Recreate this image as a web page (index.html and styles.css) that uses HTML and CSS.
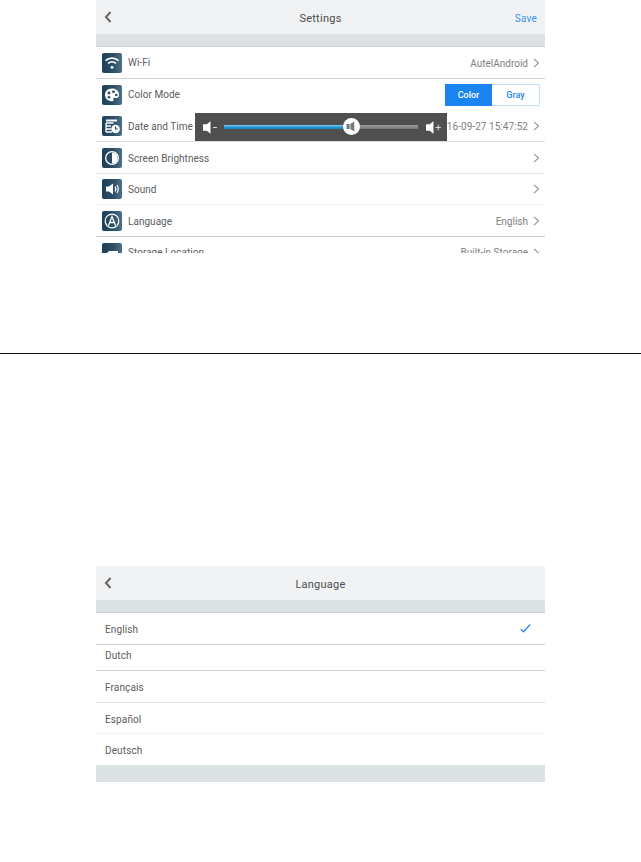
FILE: index.html
```html
<!DOCTYPE html>
<html lang="en">
<head>
<meta charset="utf-8">
<title>Settings</title>
<link rel="stylesheet" href="styles.css">
</head>
<body>
<section class="top-area">
  <div class="app clipped">
    <header class="bar">
      <svg class="back" viewBox="0 0 8 12"><path d="M6.500 1 2 6l4.500 5" /></svg>
      <span class="bar-title">Settings</span>
      <span class="save">Save</span>
    </header>
    <div class="band"></div>
    <div class="row h32 line-a">
      <svg class="icon" viewBox="0 0 20 20"><rect width="20" height="20" rx="2" fill="url(#tile)"/><g fill="none" stroke="#fff" stroke-width="1.700"><path d="M3.500 7.600c3.700-3.200 9.300-3.200 13 0"/><path d="M6 10.300c2.300-2 5.700-2 8 0"/></g><circle cx="10" cy="14.300" r="1.500" fill="#fff"/></svg>
      <span class="label">Wi-Fi</span>
      <span class="value low">AutelAndroid</span>
      <svg class="chev" viewBox="0 0 7 10"><path d="m1 .8 4.500 4.200L1 9.200"/></svg>
    </div>
    <div class="row h31">
      <svg class="icon" viewBox="0 0 20 20"><rect width="20" height="20" rx="2" fill="url(#tile)"/><path d="M10 3.500c4.200 0 7 2.700 7 6.200 0 2.600-1.800 3.700-3.400 3.200-1.500-.5-2.600.3-2.200 1.500.4 1.300-.6 2.100-2 1.900C5.700 15.900 3 13.300 3 9.800 3 6.300 5.800 3.500 10 3.500Z" fill="#fff"/><circle cx="7" cy="8" r="1.400" fill="#274a63"/><circle cx="11.500" cy="6.800" r="1.400" fill="#274a63"/><circle cx="14.300" cy="10" r="1.300" fill="#274a63"/><circle cx="7" cy="12.300" r="1.300" fill="#274a63"/></svg>
      <span class="label">Color Mode</span>
      <div class="toggle"><span class="seg on">Color</span><span class="seg">Gray</span></div>
    </div>
    <div class="row h32 line-b">
      <svg class="icon" viewBox="0 0 20 20"><rect width="20" height="20" rx="2" fill="url(#tile)"/><path d="M4 3.500h11v2H4z" fill="#fff"/><path d="M4 7h7.500M4 10h5M4 13h5M4 16h6M4 7v9" fill="none" stroke="#fff" stroke-width="1.300"/><circle cx="13.500" cy="13" r="4.300" fill="#fff"/><path d="M13.500 10.500V13h2" fill="none" stroke="#274a63" stroke-width="1.200"/></svg>
      <span class="label low">Date and Time</span>
      <span class="value low stamp">2016-09-27 15:47:52</span>
      <svg class="chev" viewBox="0 0 7 10"><path d="m1 .8 4.500 4.200L1 9.200"/></svg>
    </div>
    <div class="row h32 line-c">
      <svg class="icon" viewBox="0 0 20 20"><rect width="20" height="20" rx="2" fill="url(#tile)"/><circle cx="10" cy="10" r="6.300" fill="none" stroke="#fff" stroke-width="1.300"/><path d="M10 4.500a5.500 5.500 0 0 1 0 11Z" fill="#fff"/></svg>
      <span class="label low">Screen Brightness</span>
      <span class="value"></span>
      <svg class="chev" viewBox="0 0 7 10"><path d="m1 .8 4.500 4.200L1 9.200"/></svg>
    </div>
    <div class="row h31 line-d">
      <svg class="icon" viewBox="0 0 20 20"><rect width="20" height="20" rx="2" fill="url(#tile)"/><path d="M4 7.500h3L11 4.500v11l-4-3H4Z" fill="#fff"/><path d="M13 7.500c1 1.500 1 3.500 0 5M15 6c1.500 2.500 1.500 5.500 0 8" fill="none" stroke="#fff" stroke-width="1.200"/></svg>
      <span class="label">Sound</span>
      <span class="value"></span>
      <svg class="chev" viewBox="0 0 7 10"><path d="m1 .8 4.500 4.200L1 9.200"/></svg>
    </div>
    <div class="row h32 line-e">
      <svg class="icon" viewBox="0 0 20 20"><rect width="20" height="20" rx="2" fill="url(#tile)"/><circle cx="10" cy="10" r="6.800" fill="none" stroke="#fff" stroke-width="1.200"/><path d="m6.500 14.500 3.500-9 3.500 9M7.800 11.500h4.400" fill="none" stroke="#fff" stroke-width="1.300"/></svg>
      <span class="label low">Language</span>
      <span class="value low">English</span>
      <svg class="chev" viewBox="0 0 7 10"><path d="m1 .8 4.500 4.200L1 9.200"/></svg>
    </div>
    <div class="row h31">
      <svg class="icon" viewBox="0 0 20 20"><rect width="20" height="20" rx="2" fill="url(#tile)"/><path d="M4 11l3-3h9v8H4Z" fill="#fff"/></svg>
      <span class="label">Storage Location</span>
      <span class="value">Built-in Storage</span>
      <svg class="chev" viewBox="0 0 7 10"><path d="m1 .8 4.500 4.200L1 9.200"/></svg>
    </div>
    <div class="volume">
      <svg class="spk left" viewBox="0 0 14 12"><path d="M0 3h3.500L7 .2v11.600L3.500 9H0Z" fill="#fff"/><path d="M9.500 6H13" stroke="#ddd" stroke-width="1"/></svg>
      <div class="track"><div class="fill"></div></div>
      <div class="thumb"><svg viewBox="0 0 10 10"><path d="M.5 2.800h2.800V7.200H.5ZM4 2.800 7.500.5v9L4 7.200Z" fill="#777"/></svg></div>
      <svg class="spk right" viewBox="0 0 16 12"><path d="M0 3h3.500L7 .2v11.600L3.500 9H0Z" fill="#fff"/><path d="M9 6h5M11.500 3.500v5" stroke="#ddd" stroke-width="1"/></svg>
    </div>
  </div>
</section>
<hr class="divider">
<section class="bottom-area">
  <div class="app">
    <header class="bar">
      <svg class="back" viewBox="0 0 8 12"><path d="M6.500 1 2 6l4.500 5" /></svg>
      <span class="bar-title">Language</span>
    </header>
    <div class="band"></div>
    <div class="lang h32 l-a"><span class="low">English</span>
      <svg class="check" viewBox="0 0 11 9"><path d="M.8 5.200 3.500 7.800 10.200 .6"/></svg>
    </div>
    <div class="lang h26 l-a raised"><span>Dutch</span></div>
    <div class="lang h32 l-b"><span class="low">Français</span></div>
    <div class="lang h31 l-c"><span class="low">Español</span></div>
    <div class="lang h31"><span class="low">Deutsch</span></div>
    <div class="foot-band"></div>
  </div>
</section>
<svg class="defs" width="0" height="0"><defs><linearGradient id="tile" x1="0" x2="1" y1="0" y2="0"><stop offset="0" stop-color="#1d4059"/><stop offset=".55" stop-color="#2b4f69"/><stop offset="1" stop-color="#4d7187"/></linearGradient></defs></svg>
</body>
</html>
```
FILE: styles.css
```css
* { box-sizing: border-box; }
html, body { margin: 0; padding: 0; background: #fff; }
body { font-family: Roboto, "Liberation Sans", sans-serif; font-size: 10px; color: #5c5c5c; overflow: hidden; height: 862px; }
.top-area { height: 353px; padding-left: 96px; }
.bottom-area { padding: 212px 0 0 96px; }
.divider { margin: 0; border: 0; height: 1px; background: #111; }
.app { width: 449px; position: relative; background: #fff; }
.clipped { height: 253px; overflow: hidden; }
.bar { height: 34px; background: #f0f2f4; position: relative; display: flex; align-items: center; justify-content: center; }
.back { position: absolute; left: 8px; top: 11px; width: 8px; height: 12px; fill: none; stroke: #666; stroke-width: 2; }
.bar-title { font-size: 11px; color: #4c4c4c; letter-spacing: .25px; margin-top: 2px; }
.save { position: absolute; right: 8px; top: 13px; color: #3b94ef; font-size: 10px; letter-spacing: .2px; }
.band { height: 13px; background: #dce1e3; border-bottom: 1px solid #ced3d5; }
.row { display: flex; align-items: center; padding: 0 5px 0 6px; }
.h32 { height: 32px; }
.h31 { height: 31px; }
.h26 { height: 26px; }
.low { margin-top: 2px; }
.line-a { border-bottom: 1px solid #d2d2d2; }
.line-b { border-bottom: 1px solid #dedede; }
.line-c { border-bottom: 1px solid #e6e6e6; }
.line-d { border-bottom: 1px solid #f3f3f3; }
.line-e { border-bottom: 1px solid #c9c9c9; }
.icon { width: 20px; height: 20px; flex: none; margin-right: 6px; }
.label { flex: 1; letter-spacing: .03px; color: #5c5c5c; }
.value { color: #808080; }
.stamp { letter-spacing: .05px; }
.chev { width: 7px; height: 10px; margin-left: 5px; fill: none; stroke: #929292; stroke-width: 1.100; flex: none; }
.toggle { display: flex; width: 95px; height: 22px; border: 1px solid #bcdcfb; border-radius: 2px; font-size: 9px; font-weight: 500; }
.seg { flex: 1; display: flex; align-items: center; justify-content: center; color: #1a84f0; }
.seg.on { background: #1a84f0; color: #fff; margin: -1px 0 -1px -1px; }
.volume { position: absolute; left: 99px; top: 113px; width: 252px; height: 28px; background: #4f4f4f; }
.spk { position: absolute; top: 8px; height: 13px; }
.spk.left { left: 8px; width: 15px; }
.spk.right { left: 231px; width: 17px; }
.track { position: absolute; left: 29px; top: 12px; width: 194px; height: 4px; background: linear-gradient(#9a9f9c, #727775); }
.fill { width: 122px; height: 4px; background: linear-gradient(#7fd0f2, #2a9ad6 50%, #1a7fb8); }
.thumb { position: absolute; left: 148px; top: 5px; width: 17px; height: 17px; border-radius: 50%; background: #fff; display: flex; align-items: center; justify-content: center; }
.thumb svg { width: 11px; height: 11px; }
.lang { display: flex; align-items: center; justify-content: space-between; padding: 0 14px 0 9px; background: #fff; letter-spacing: .12px; color: #5c5c5c; }
.raised { padding-bottom: 4px; }
.l-a { border-bottom: 1px solid #d0d3d5; }
.l-b { border-bottom: 1px solid #dfe1e2; }
.l-c { border-bottom: 1px solid #f0f0f0; }
.check { width: 11px; height: 9px; fill: none; stroke: #2f8cf0; stroke-width: 1.400; }
.foot-band { height: 17px; background: #dce1e3; }
.defs { position: absolute; }
```
